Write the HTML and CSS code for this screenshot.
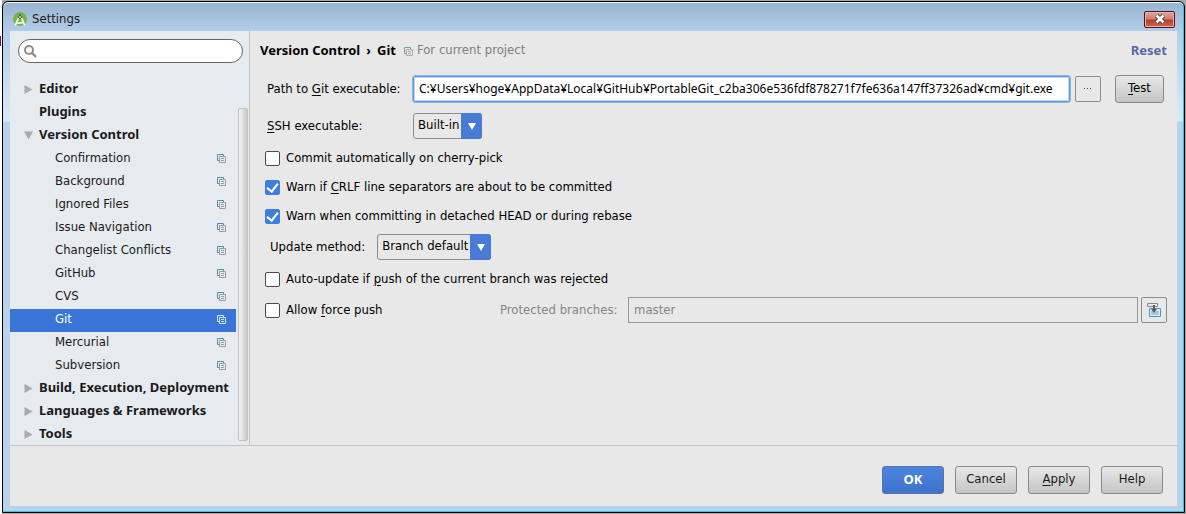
FILE: index.html
```html
<!DOCTYPE html>
<html lang="en">
<head>
<meta charset="utf-8">
<title>Settings</title>
<link rel="stylesheet" href="styles.css">
</head>
<body>
<svg class="defs" aria-hidden="true">
  <symbol id="copy" viewBox="0 0 9 9">
    <path class="back" d="M2 6.5H.5V.5H6.5V2" fill="none"/>
    <path class="front" d="M2.5 2.5h6v6h-6zM4 4.5h3M4 6.5h3" fill="none"/>
  </symbol>
  <symbol id="right" viewBox="0 0 8 9"><path d="M0 0l8 4.5L0 9z" fill="#a9abad"/></symbol>
  <symbol id="down" viewBox="0 0 9 8"><path d="M0 0h9L4.5 8z" fill="#a9abad"/></symbol>
</svg>
<div class="window">
  <header class="titlebar">
    <svg class="logo" viewBox="0 0 14 14" aria-hidden="true">
      <circle cx="7" cy="7" r="7" fill="#78b544"/>
      <path d="M6 2h2v2h1v3H5V4h1z" fill="#56625c"/>
      <path d="M5.5 6L2.2 13.4M8.6 6l3.2 7.4M3.6 10.4q3.6 1.8 6.6-.4" fill="none" stroke="#f4f7f2" stroke-width="1.7"/>
      <circle cx="7" cy="5" r="1" fill="#d6e2d0"/>
    </svg>
    <h1 class="title">Settings</h1>
    <button class="close" aria-label="Close">
      <svg viewBox="0 0 12 10" aria-hidden="true"><path d="M2.5 1.5l7 7M9.5 1.5l-7 7" stroke="#46455a" stroke-width="4.6"/><path d="M2.5 1.5l7 7M9.5 1.5l-7 7" stroke="#fff" stroke-width="2.6"/></svg>
    </button>
  </header>
  <div class="body">
    <aside class="sidebar">
      <div class="search">
        <svg viewBox="0 0 13 13" aria-hidden="true"><circle cx="5" cy="5" r="4" fill="none" stroke="#8c8c8c" stroke-width="2"/><path d="M8 8l4 4" stroke="#8c8c8c" stroke-width="2.4"/></svg>
        <input type="text" aria-label="Search settings">
      </div>
      <nav class="tree-pane">
        <ul class="tree">
          <li class="group"><svg class="arrow"><use href="#right"/></svg>Editor</li>
          <li class="group"><span class="arrow"></span>Plugins</li>
          <li class="group"><svg class="arrow"><use href="#down"/></svg>Version Control</li>
          <li class="item">Confirmation<svg class="copy"><use href="#copy"/></svg></li>
          <li class="item">Background<svg class="copy"><use href="#copy"/></svg></li>
          <li class="item">Ignored Files<svg class="copy"><use href="#copy"/></svg></li>
          <li class="item">Issue Navigation<svg class="copy"><use href="#copy"/></svg></li>
          <li class="item">Changelist Conflicts<svg class="copy"><use href="#copy"/></svg></li>
          <li class="item">GitHub<svg class="copy"><use href="#copy"/></svg></li>
          <li class="item">CVS<svg class="copy"><use href="#copy"/></svg></li>
          <li class="item selected">Git<svg class="copy"><use href="#copy"/></svg></li>
          <li class="item">Mercurial<svg class="copy"><use href="#copy"/></svg></li>
          <li class="item">Subversion<svg class="copy"><use href="#copy"/></svg></li>
          <li class="group"><svg class="arrow"><use href="#right"/></svg>Build, Execution, Deployment</li>
          <li class="group"><svg class="arrow"><use href="#right"/></svg>Languages &amp; Frameworks</li>
          <li class="group"><svg class="arrow"><use href="#right"/></svg>Tools</li>
        </ul>
        <div class="scroll"><div class="thumb"></div></div>
      </nav>
    </aside>
    <main class="content">
      <div class="crumbs">
        <h2>Version Control<span class="sep">›</span>Git</h2>
        <svg class="copy"><use href="#copy"/></svg>
        <span class="scope">For current project</span>
        <a class="reset" href="#">Reset</a>
      </div>
      <div class="row path-row">
        <label class="field-label" for="path">Path to <u>G</u>it executable:</label>
        <input class="path" id="path" type="text" value="C:¥Users¥hoge¥AppData¥Local¥GitHub¥PortableGit_c2ba306e536fdf878271f7fe636a147ff37326ad¥cmd¥git.exe">
        <button class="square dots" aria-label="Browse"><svg viewBox="0 0 8 2" aria-hidden="true"><path d="M0 0h1v1H0zM3 0h1v1H3zM6 0h1v1H6z" fill="#444"/></svg></button>
        <button class="btn test"><span><u>T</u>est</span></button>
      </div>
      <div class="row ssh-row">
        <label class="field-label" for="ssh"><u>S</u>SH executable:</label>
        <span class="combo"><select id="ssh"><option>Built-in</option></select><span class="combo-arrow"><svg viewBox="0 0 8 7" aria-hidden="true"><path d="M0 0h8L4 7z" fill="#fff"/></svg></span></span>
      </div>
      <label class="check first"><input type="checkbox"><span>Commit automatically on cherry-pick</span></label>
      <label class="check"><input type="checkbox" checked><span>Warn if <u>C</u>RLF line separators are about to be committed</span></label>
      <label class="check"><input type="checkbox" checked><span>Warn when committing in detached HEAD or during rebase</span></label>
      <div class="row update-row">
        <label for="update">Update method:</label>
        <span class="combo"><select id="update"><option>Branch default</option></select><span class="combo-arrow"><svg viewBox="0 0 8 7" aria-hidden="true"><path d="M0 0h8L4 7z" fill="#fff"/></svg></span></span>
      </div>
      <label class="check auto"><input type="checkbox"><span>Auto-update if <u>p</u>ush of the current branch was rejected</span></label>
      <div class="row force-row">
        <label class="check force"><input type="checkbox"><span>Allow <u>f</u>orce push</span></label>
        <label class="muted" for="protected">Protected branches:</label>
        <input class="protected" id="protected" type="text" value="master" disabled>
        <button class="square" aria-label="Expand branches">
          <svg class="expand" viewBox="0 0 14 14" aria-hidden="true"><path d="M.5.5h10v3H.5z" fill="none" stroke="#8a8a8a"/><path d="M2.5 5.5h11v8h-11z" fill="#dceaf1" stroke="#4a9ac4"/><path d="M4 8h8v4H4z" fill="#a9c8d8"/><path d="M6 2h2v4h2L7 10 4 6h2z" fill="#5a5a5a"/></svg>
        </button>
      </div>
    </main>
  </div>
  <footer class="actions">
    <button class="btn primary"><span>OK</span></button>
    <button class="btn"><span>Cancel</span></button>
    <button class="btn"><span><u>A</u>pply</span></button>
    <button class="btn"><span>Help</span></button>
  </footer>
</div>
</body>
</html>
```
FILE: styles.css
```css
* { box-sizing: border-box; }
body {
  margin: 0;
  min-height: 100vh;
  display: grid;
  padding: 1px 1px 1px 2px;
  background:
    linear-gradient(#800080, #800080) 0 36px / 1px 10px no-repeat,
    linear-gradient(to right, #fff 2px, #a8a8a8 2px);
  font: 13px/18px "DejaVu Sans Condensed", "DejaVu Sans", sans-serif;
  color: #1a1a1a;
}
h1, h2, ul { margin: 0; padding: 0; list-style: none; font: inherit; }
input, button, select { font: inherit; color: inherit; margin: 0; }
button { padding: 0; }
u { text-underline-offset: 2px; text-decoration-thickness: 1px; }
svg { display: block; flex: none; }
.defs { position: absolute; width: 0; height: 0; }

.window {
  display: flex;
  flex-direction: column;
  min-width: 0;
  border: 1px solid #000;
  border-radius: 6px 6px 0 0;
  padding: 0 7px 6px;
  box-shadow: inset -1px -1px #35c3e0, inset 0 1px #f4f8fc;
  background: linear-gradient(#98b4d2, #b4cdea 30px, #dbe8f6 119px, #b9d1ea 120px);
}
.titlebar { display: flex; align-items: center; height: 29px; padding: 5px 2px 0 3px; }
.logo { width: 14px; height: 14px; }
.title { margin-left: 5px; flex: 1; }
.close {
  width: 31px;
  height: 17px;
  display: grid;
  place-items: center;
  border: 1px solid #481526;
  border-radius: 2px;
  box-shadow: inset 0 0 0 1px #eeb3a8;
  background: linear-gradient(#e2a096, #d08070 48%, #b83c20 52%, #cc6650);
}
.close svg { width: 12px; height: 10px; }

.body { flex: 1; display: flex; min-height: 0; border-bottom: 1px solid #c4c4c4; background: #e8e8e8; }
.sidebar { width: 240px; flex: none; background: #e6ebef; border-right: 1px solid #c0c2c4; }
.search {
  display: flex;
  align-items: center;
  height: 24px;
  margin: 8px 6px 16px 8px;
  padding: 0 5px;
  gap: 4px;
  border: 1px solid #666;
  border-radius: 12px;
  background: #fff;
}
.search svg { width: 13px; height: 13px; }
.search input { flex: 1; min-width: 0; border: 0; outline: 0; background: none; }
.tree-pane { display: flex; }
.tree { flex: 1; min-width: 0; margin: 0 2px -2px 0; }
.tree li { display: flex; align-items: center; height: 23px; white-space: nowrap; padding-bottom: 4px; }
.tree .group { padding-left: 14px; padding-bottom: 5px; font-family: "Noto Sans", sans-serif; font-weight: 700; }
.arrow { width: 9px; height: 9px; margin: 3px 6px 0 0; }
.tree .item { justify-content: space-between; padding-left: 45px; padding-right: 10px; }
.copy { width: 9px; height: 9px; }
.item .copy { margin-top: 2px; }
.back { stroke: #4f8db0; }
.front { stroke: #9b9b9b; }
.selected { background: #3875d7; color: #fff; }
.selected .copy { filter: brightness(0) invert(1) opacity(.8); }
.scroll { width: 11px; padding: 29px 1px 4px 0; display: flex; }
.thumb {
  flex: 1;
  border: 1px solid #bfc1c3;
  border-radius: 2px;
  background: linear-gradient(to right, #f2f2f2, #c9c9c9);
}

.content { flex: 1; min-width: 0; padding: 10px 10px 0 15px; color: #000; }
.crumbs { display: flex; align-items: center; margin-left: -5px; }
.crumbs h2, .reset { font-family: "Noto Sans", sans-serif; font-weight: 700; }
.sep { margin: 0 6px; }
.crumbs .copy { margin: 2px 4px 0 8px; opacity: .8; }
.scope { flex: 1; color: #808080; }
.reset { color: #5868a8; text-decoration: none; }
.row { display: flex; align-items: center; }
.path-row { margin: 16px 3px 0 2px; }
.field-label { width: 146px; flex: none; }
.path {
  flex: 1;
  min-width: 0;
  height: 26px;
  padding: 0 4px 2px 5px;
  border: 1px solid #5c9ae0;
  border-radius: 2px;
  outline: 1px solid #86b5ea;
  box-shadow: inset 0 0 0 1px #bcd6f6;
  background: #fff;
  font-family: "Noto Sans", sans-serif;
  font-size: 12px;
}
.square {
  width: 26px;
  height: 26px;
  flex: none;
  display: grid;
  place-items: center;
  border: 1px solid #8c8c8c;
  border-radius: 2px;
  background: #e8e8e8;
}
.dots { margin: 0 14px 0 5px; }
.dots svg { width: 8px; height: 2px; }
.btn {
  width: 62px;
  height: 28px;
  padding-bottom: 3px;
  border: 1px solid #8a8a8a;
  border-radius: 3px;
  background: linear-gradient(#e8e8e8, #c4c4c4);
}
.test { width: 49px; }
.ssh-row { margin: 10px 0 0 2px; }
.combo { position: relative; }
.combo select {
  appearance: none;
  display: block;
  height: 26px;
  padding: 0 21px 2px 4px;
  border: 1px solid #8c8c8c;
  border-radius: 3px;
  background: #e8e8e8;
}
.combo-arrow {
  position: absolute;
  inset: 0 0 0 auto;
  width: 21px;
  display: grid;
  place-items: center;
  border-radius: 0 3px 3px 0;
  background: #477bd6;
  pointer-events: none;
}
.combo-arrow svg { width: 8px; height: 7px; }
.check { display: flex; align-items: center; gap: 6px; height: 18px; margin-bottom: 11px; width: max-content; }
.check.first { margin-top: 10px; }
.check input {
  appearance: none;
  width: 15px;
  height: 15px;
  display: grid;
  place-items: center;
  border: 1px solid #4a4a4a;
  border-radius: 2px;
  background: #fff;
}
.check input:checked { border-color: #3d7ede; background: #3d7ede; }
.check input:checked::after {
  content: "";
  width: 5px;
  height: 9px;
  margin-bottom: 2px;
  border: solid #fff;
  border-width: 0 2px 2px 0;
  transform: rotate(38deg);
}
.update-row { margin: -2px 0 10px 5px; gap: 12px; }
.check.auto { margin-bottom: 9px; }
.check.force { margin: 0; flex: 0 0 235px; }
.muted { flex: none; width: 128px; color: #868686; }
.protected {
  flex: 1;
  min-width: 0;
  height: 26px;
  margin-right: 3px;
  padding: 0 5px 2px;
  border: 1px solid #969696;
  background: #e8e8e8;
  color: #868686;
}
.expand { width: 14px; height: 14px; }

.actions { display: flex; justify-content: flex-end; gap: 11px; padding: 20px 14px 12px; background: #e8e8e8; }
.primary {
  border-color: #5a73a0;
  background: linear-gradient(#4a84de, #3f73cc);
  color: #fff;
  font-family: "Noto Sans", sans-serif;
  font-weight: 700;
}
```
